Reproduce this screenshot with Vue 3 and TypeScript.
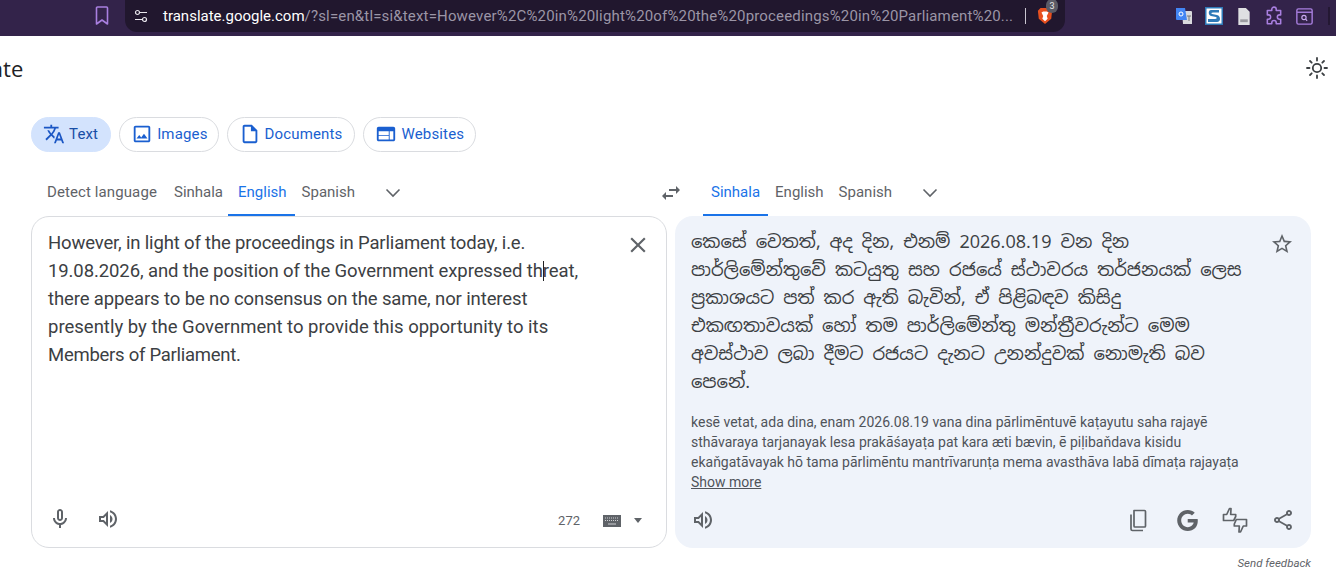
<script setup lang="ts">
const P = {
  mic: 'M12 14c1.66 0 3-1.34 3-3V5c0-1.66-1.34-3-3-3S9 3.34 9 5v6c0 1.66 1.34 3 3 3zm-1-9c0-.55.45-1 1-1s1 .45 1 1v6c0 .55-.45 1-1 1s-1-.45-1-1V5zm6 6c0 2.76-2.24 5-5 5s-5-2.24-5-5H5c0 3.53 2.61 6.43 6 6.92V21h2v-3.08c3.39-.49 6-3.39 6-6.92h-2z',
  vol: 'M3 9v6h4l5 5V4L7 9H3zm7-.17v6.34L7.83 13H5v-2h2.83L10 8.83zM16.5 12c0-1.77-1.02-3.29-2.5-4.03v8.05c1.48-.73 2.5-2.25 2.5-4.02zM14 3.23v2.06c2.89.86 5 3.54 5 6.71s-2.11 5.85-5 6.71v2.06c4.01-.91 7-4.49 7-8.77 0-4.28-2.99-7.86-7-8.77z',
  close: 'M19 6.41L17.59 5 12 10.59 6.41 5 5 6.41 10.59 12 5 17.59 6.41 19 12 13.41 17.59 19 19 17.59 13.41 12z',
  star: 'M22 9.24l-7.19-.62L12 2 9.19 8.63 2 9.24l5.46 4.73L5.82 21 12 17.27 18.18 21l-1.63-7.03L22 9.24zM12 15.4l-3.76 2.27 1-4.28-3.32-2.88 4.38-.38L12 6.1l1.71 4.04 4.38.38-3.32 2.88 1 4.28L12 15.4z',
  share: 'M18 16.08c-.76 0-1.44.3-1.96.77L8.91 12.7c.05-.23.09-.46.09-.7s-.04-.47-.09-.7l7.05-4.11c.54.5 1.25.81 2.04.81 1.66 0 3-1.34 3-3s-1.34-3-3-3-3 1.34-3 3c0 .24.04.47.09.7L8.04 9.81C7.5 9.31 6.79 9 6 9c-1.66 0-3 1.34-3 3s1.34 3 3 3c.79 0 1.5-.31 2.04-.81l7.12 4.16c-.05.21-.08.43-.08.65 0 1.61 1.31 2.92 2.92 2.92s2.92-1.31 2.92-2.92-1.31-2.92-2.92-2.92zM18 4c.55 0 1 .45 1 1s-.45 1-1 1-1-.45-1-1 .45-1 1-1zM6 13c-.55 0-1-.45-1-1s.45-1 1-1 1 .45 1 1-.45 1-1 1zm12 7.02c-.55 0-1-.45-1-1s.45-1 1-1 1 .45 1 1-.45 1-1 1z',
  g: 'M12.24 10.285V14.4h6.806c-.275 1.765-2.056 5.174-6.806 5.174-4.095 0-7.439-3.389-7.439-7.574s3.345-7.574 7.439-7.574c2.33 0 3.891.989 4.785 1.849l3.254-3.138C18.189 1.186 15.479 0 12.24 0c-6.635 0-12 5.365-12 12s5.365 12 12 12c6.926 0 11.52-4.869 11.52-11.726 0-.788-.085-1.39-.189-1.989H12.24z',
  translate: 'M12.87 15.07l-2.54-2.51.03-.03c1.74-1.94 2.98-4.17 3.71-6.53H17V4h-7V2H8v2H1v1.99h11.17C11.5 7.92 10.44 9.75 9 11.35 8.07 10.32 7.3 9.19 6.69 8h-2c.73 1.63 1.73 3.17 2.98 4.56l-5.09 5.02L4 19l5-5 3.11 3.11.76-2.04zM18.5 10h-2L12 22h2l1.12-3h4.75L21 22h2l-4.5-12zm-2.62 7l1.62-4.33L19.12 17h-3.24z',
  swap: 'M6.99 11L3 15l3.99 4v-3H14v-2H6.99v-3zM21 9l-3.99-4v3H10v2h7.01v3L21 9z',
  image: 'M19 5v14H5V5h14m0-2H5c-1.1 0-2 .9-2 2v14c0 1.1.9 2 2 2h14c1.1 0 2-.9 2-2V5c0-1.1-.9-2-2-2zm-4.86 8.86l-3 3.87L9 13.14 6 17h12l-3.86-5.14z',
  doc: 'M14 2H6c-1.1 0-2 .9-2 2v16c0 1.1.9 2 2 2h12c1.1 0 2-.9 2-2V8l-6-6zm4 18H6V4h7v5h5v11z',
  web: 'M20 4H4c-1.1 0-2 .9-2 2v12c0 1.1.9 2 2 2h16c1.1 0 2-.9 2-2V6c0-1.1-.9-2-2-2zM15 18H4v-4h11v4zm0-5H4V9h11v4zm5 5h-4V9h4v9z',
}
const sourceTabs = [
  { name: 'Detect language', active: false },
  { name: 'Sinhala', active: false },
  { name: 'English', active: true },
  { name: 'Spanish', active: false },
]
const targetTabs = [
  { name: 'Sinhala', active: true },
  { name: 'English', active: false },
  { name: 'Spanish', active: false },
]
const modes = [
  { name: 'Images', icon: P.image },
  { name: 'Documents', icon: P.doc },
  { name: 'Websites', icon: P.web },
]
</script>

<template>
  <div class="page">
    <header class="chrome">
      <svg class="bookmark" viewBox="0 0 14 20" width="14" height="20"><path d="M1.500 2a1 1 0 0 1 1-1h9a1 1 0 0 1 1 1v16L7 14l-5.500 4z" fill="none" stroke="#a97fe0" stroke-width="1.600" stroke-linejoin="round"/></svg>
      <div class="omnibox">
        <svg class="tune" viewBox="0 0 14 14" width="14" height="14"><g fill="none" stroke="#e8e6ec" stroke-width="1.200"><circle cx="3.500" cy="3.500" r="2"/><path d="M6 3.500h7M1 10.500h7"/><circle cx="10.500" cy="10.500" r="2"/></g></svg>
        <div class="url"><span class="host">translate.google.com</span>/?sl=en&amp;tl=si&amp;text=However%2C%20in%20light%20of%20the%20proceedings%20in%20Parliament%20...</div>
        <span class="divider"></span>
        <div class="brave">
          <svg viewBox="0 0 18 20" width="16" height="20"><path d="M4 1h10l3 3-1 9-7 6-7-6-1-9z" fill="#e8501f"/><path d="M5 6l2-1h4l2 1-2 4 1 3-3 3-3-3 1-3z" fill="#fff"/></svg>
          <span class="badge">3</span>
        </div>
      </div>
      <div class="extensions">
        <span class="ext"><svg viewBox="0 0 18 18" width="18" height="18"><path d="M7 4h9a1 1 0 0 1 1 1v12H8z" fill="#d9dadd"/><path d="M1 1h9l2 12H2a1 1 0 0 1-1-1z" fill="#4285f4"/><circle cx="6" cy="7" r="2" fill="none" stroke="#fff" stroke-width="1"/><path d="M12 9h4M14 9v5" stroke="#777" stroke-width="1"/></svg></span>
        <span class="ext"><svg viewBox="0 0 18 18" width="18" height="18"><rect width="18" height="18" fill="#2f7ab8"/><rect x="1.500" y="1.500" width="15" height="15" fill="#fff"/><path d="M14 3H6C3 3 3 8 6 9l5 1c1 .5 1 2-1 2H3v3h9c4 0 4-6 0-7L7 7c-1-.5-1-1.500 1-1.500h6z" fill="#2f7ab8"/></svg></span>
        <span class="ext"><svg viewBox="0 0 14 18" width="14" height="17"><path d="M1 0h8l4 4v14H1z" fill="#dfe0e2"/><rect x="3" y="12" width="8" height="3" fill="#9b9ba0"/></svg></span>
        <span class="ext"><svg viewBox="0 0 18 18" width="20" height="20"><path d="M7 3a2 2 0 0 1 4 0v1h4v4h-1a2 2 0 0 0 0 4h1v4h-4v-1a2 2 0 0 0-4 0v1H3v-4h1a2 2 0 0 0 0-4H3V4h4z" fill="none" stroke="#a97fe0" stroke-width="1.400" stroke-linejoin="round"/></svg></span>
        <span class="ext"><svg viewBox="0 0 16 16" width="17" height="17"><rect x=".8" y=".8" width="14.400" height="14.400" rx="1.500" fill="none" stroke="#a97fe0" stroke-width="1.300"/><path d="M1 4h14" stroke="#a97fe0" stroke-width="1.300"/><circle cx="7.500" cy="9" r="2" fill="none" stroke="#c9a8f0" stroke-width="1.100"/><path d="M9 10.500l1.500 1.500" stroke="#c9a8f0" stroke-width="1.100"/></svg></span>
        <span class="ext-end"></span>
      </div>
    </header>

    <div class="title-row">
      <span class="title">Translate</span>
      <svg class="sun" viewBox="0 0 24 24" width="24" height="24"><g fill="none" stroke="#3c4043" stroke-width="1.800" stroke-linecap="round"><circle cx="12" cy="12" r="4.200"/><path d="M12 2v2.500M12 19.500V22M2 12h2.500M19.500 12H22M5 5l1.700 1.700M17.300 17.300L19 19M5 19l1.700-1.700M17.300 6.700L19 5"/></g></svg>
    </div>

    <nav class="modes">
      <button class="mode mode-active">
        <svg viewBox="0 0 24 24" width="22" height="22"><path :d="P.translate" fill="#1a56c4"/></svg>
        Text
      </button>
      <button v-for="m in modes" :key="m.name" class="mode">
        <svg viewBox="0 0 24 24" width="22" height="22"><path :d="m.icon" fill="#1a5fd0"/></svg>
        {{ m.name }}
      </button>
    </nav>

    <div class="lang-row">
      <div class="lang-side source-side">
        <span v-for="t in sourceTabs" :key="t.name" class="lang" :class="{ active: t.active }">{{ t.name }}</span>
        <svg class="chev" viewBox="0 0 16 10" width="16" height="10"><path d="M1.500 1.500L8 8l6.500-6.500" fill="none" stroke="#5f6368" stroke-width="1.600"/></svg>
      </div>
      <svg class="swap" viewBox="0 0 24 24" width="24" height="24"><path :d="P.swap" fill="#5f6368"/></svg>
      <div class="lang-side target-side">
        <span v-for="t in targetTabs" :key="t.name" class="lang" :class="{ active: t.active }">{{ t.name }}</span>
        <svg class="chev" viewBox="0 0 16 10" width="16" height="10"><path d="M1.500 1.500L8 8l6.500-6.500" fill="none" stroke="#5f6368" stroke-width="1.600"/></svg>
      </div>
    </div>

    <main class="panels">
      <section class="panel source">
        <div class="panel-top">
          <p class="source-text">
            <span class="line l1">However, in light of the proceedings in Parliament today, i.e.</span>
            <span class="line l2">19.08.2026, and the position of the Government expressed th<span class="caret"></span>reat,</span>
            <span class="line l3">there appears to be no consensus on the same, nor interest</span>
            <span class="line l4">presently by the Government to provide this opportunity to its</span>
            <span class="line l5">Members of Parliament.</span>
          </p>
          <svg class="corner" viewBox="0 0 24 24" width="26" height="26"><path :d="P.close" fill="#5f6368"/></svg>
        </div>
        <div class="panel-foot">
          <div class="foot-group">
            <svg viewBox="0 0 24 24" width="24" height="24"><path :d="P.mic" fill="#5f6368"/></svg>
            <svg viewBox="0 0 24 24" width="24" height="24"><path :d="P.vol" fill="#5f6368"/></svg>
          </div>
          <div class="foot-right">
            <span class="count">272</span>
            <svg class="kbd" viewBox="0 0 18 12" width="18" height="12"><rect width="18" height="12" y="0" fill="#5f6368"/><path d="M2 3h14M2 5.500h14" stroke="#cfd0d3" stroke-width="1" stroke-dasharray="1 1"/><path d="M5 9h8" stroke="#cfd0d3" stroke-width="1"/></svg>
            <svg viewBox="0 0 8 5" width="8" height="5"><path d="M0 0h8L4 5z" fill="#5f6368"/></svg>
          </div>
        </div>
      </section>

      <section class="panel target">
        <div class="panel-top">
          <div class="target-body">
            <p class="target-text">කෙසේ වෙතත්, අද දින, එනම් 2026.08.19 වන දින<br>පාර්ලිමේන්තුවේ කටයුතු සහ රජයේ ස්ථාවරය තර්ජනයක් ලෙස<br>ප්‍රකාශයට පත් කර ඇති බැවින්, ඒ පිළිබඳව කිසිදු<br>එකඟතාවයක් හෝ තම පාර්ලිමේන්තු මන්ත්‍රීවරුන්ට මෙම<br>අවස්ථාව ලබා දීමට රජයට දැනට උනන්දුවක් නොමැති බව<br>පෙනේ.</p>
            <p class="translit">kesē vetat, ada dina, enam 2026.08.19 vana dina pārlimēntuvē kaṭayutu saha rajayē<br>sthāvaraya tarjanayak lesa prakāśayaṭa pat kara æti bævin, ē piḷibaňdava kisidu<br>ekaňgatāvayak hō tama pārlimēntu mantrīvarunṭa mema avasthāva labā dīmaṭa rajayaṭa</p>
            <a class="more">Show more</a>
          </div>
          <svg class="corner star" viewBox="0 0 24 24" width="24" height="24"><path :d="P.star" fill="#5f6368"/></svg>
        </div>
        <div class="panel-foot target-foot">
          <svg viewBox="0 0 24 24" width="24" height="24"><path :d="P.vol" fill="#5f6368"/></svg>
          <div class="foot-group">
            <svg viewBox="0 0 24 24" width="24" height="24"><g fill="none" stroke="#5f6368" stroke-width="1.700" stroke-linejoin="round"><path d="M7 2.500h10.500a1 1 0 0 1 1 1V18a1 1 0 0 1-1 1H8a1 1 0 0 1-1-1z"/><path d="M4 6.500V21a1.500 1.500 0 0 0 1.500 1.500H16"/></g></svg>
            <span class="g-slot"><svg viewBox="0 0 24 24" width="21" height="21"><path :d="P.g" fill="#5f6368"/></svg></span>
            <svg viewBox="0 0 26 26" width="26" height="26" class="fb"><g fill="none" stroke="#5f6368" stroke-width="1.700" stroke-linejoin="round"><path d="M1.500 13.500V7.500h3.200L7.500 1.500H9l-.3 6h5v2l-2 4z"/><path d="M24.500 12.500v6.500h-3.200L18.500 25H17l.3-6h-5v-2l2-4.500z"/></g></svg>
            <svg viewBox="0 0 24 24" width="24" height="24"><path :d="P.share" fill="#5f6368"/></svg>
          </div>
        </div>
      </section>
    </main>

    <div class="feedback">Send feedback</div>
  </div>
</template>

<style scoped>
.page {
  width: 1336px;
  height: 585px;
  overflow: hidden;
  background: #fff;
  font-family: Roboto, "Noto Sans", sans-serif;
  color: #3c4043;
}
.chrome {
  height: 36px;
  background: #33234a;
  display: flex;
  align-items: flex-start;
}
.bookmark { margin: 6px 0 0 95px; }
.omnibox {
  margin-left: 16px;
  width: 940px;
  height: 32px;
  background: #21172e;
  border-radius: 0 0 12px 12px;
  display: flex;
  align-items: center;
  box-sizing: border-box;
  padding-left: 9px;
}
.url {
  margin-left: 15px;
  font-size: 15px;
  color: #9b95a6;
  white-space: nowrap;
  width: 848px;
  letter-spacing: .16px;
}
.host { color: #fff; letter-spacing: 0; }
.divider { width: 1px; height: 16px; background: #c9c5d0; margin-left: 14px; }
.brave { position: relative; margin-left: 11px; height: 20px; }
.badge {
  position: absolute;
  left: 9px;
  top: -7px;
  width: 12px;
  height: 14px;
  border-radius: 6px;
  background: #5b5b66;
  color: #e8e8ea;
  font-size: 9px;
  line-height: 14px;
  text-align: center;
}
.extensions {
  display: flex;
  align-items: center;
  margin: 6px 0 0 104px;
  height: 20px;
}
.ext {
  width: 30px;
  height: 20px;
  display: flex;
  align-items: center;
  justify-content: center;
}
.ext-end { width: 2px; height: 18px; background: #241833; margin-left: 9px; }
.title-row {
  height: 66px;
  display: flex;
  align-items: center;
  justify-content: space-between;
  padding: 0 7px 2px 0;
  box-sizing: border-box;
}
.title {
  font-family: "Open Sans", sans-serif;
  font-size: 22px;
  color: #202124;
  margin-left: -72px;
  margin-top: -1px;
}
.modes {
  display: flex;
  gap: 8px;
  margin: 15px 0 0 31px;
}
.mode {
  height: 35px;
  border: 1px solid #dadce0;
  border-radius: 18px;
  background: #fff;
  color: #1a5fd0;
  font-family: Roboto, sans-serif;
  font-size: 15px;
  font-weight: 400;
  letter-spacing: .15px;
  padding: 0 10px 1px 11px;
  display: flex;
  align-items: center;
  gap: 4px;
}
.mode:nth-child(3) { padding-right: 12px; }
.mode:nth-child(4) { padding-right: 11px; }
.mode-active {
  background: #d3e3fd;
  border-color: #d3e3fd;
  color: #174ea6;
  padding-right: 12px;
}
.lang-row {
  display: flex;
  align-items: center;
  height: 47px;
  margin-top: 17px;
  padding-left: 31px;
}
.lang-side {
  display: flex;
  align-items: center;
  height: 47px;
}
.source-side { width: 628px; }
.target-side { margin-left: 20px; }
.lang {
  height: 47px;
  line-height: 47px;
  padding: 0 8px;
  font-size: 15px;
  color: #5f6368;
  box-sizing: border-box;
  white-space: nowrap;
}
.lang.active { color: #1a73e8; border-bottom: 2px solid #1a73e8; }
.source-side .lang:nth-child(1) { margin-left: 8px; padding-right: 9px; letter-spacing: .1px; }
.source-side .lang:nth-child(2) { padding-right: 5px; }
.source-side .lang:nth-child(3) { padding-left: 10px; }
.source-side .lang:nth-child(4) { padding-left: 7px; }
.target-side .lang:nth-child(2) { padding-left: 7px; }
.target-side .lang:nth-child(3) { padding-left: 7px; }
.chev { margin-left: 22px; }
.swap { flex: none; }
.panels {
  display: flex;
  gap: 8px;
  padding-left: 31px;
}
.panel {
  width: 636px;
  height: 332px;
  box-sizing: border-box;
  border-radius: 18px;
  display: flex;
  flex-direction: column;
  justify-content: space-between;
}
.source { border: 1px solid #dadce0; }
.target { background: #eff3fa; }
.panel-top { display: flex; justify-content: space-between; align-items: flex-start; }
.source-text {
  margin: 12px 0 0 16px;
  font-size: 18.500px;
  line-height: 28px;
  color: #3c4043;
  white-space: nowrap;
}
.line { display: block; }
.l1 { letter-spacing: -.16px; }
.l2 { letter-spacing: -.1px; }
.l3 { letter-spacing: -.12px; }
.l5 { letter-spacing: -.27px; }
.caret {
  display: inline-block;
  width: 1px;
  height: 20px;
  background: #202124;
  vertical-align: -4px;
  margin-right: -1px;
}
.corner { margin: 15px 15px 0 0; flex: none; }
.star { margin: 16px 17px 0 0; }
.target-body { padding: 12px 0 0 16px; }
.target-text {
  margin: 0;
  font-size: 18px;
  line-height: 28px;
  color: #3c4043;
  font-family: "Noto Sans Sinhala", "Noto Sans", sans-serif;
  white-space: nowrap;
}
.translit {
  margin: 16px 0 0;
  font-size: 14px;
  line-height: 20px;
  color: #50545a;
  white-space: nowrap;
}
.more {
  display: block;
  font-size: 14px;
  line-height: 20px;
  color: #50545a;
  text-decoration: underline;
}
.panel-foot {
  display: flex;
  align-items: center;
  justify-content: space-between;
  height: 24px;
  padding: 0 24px 16px 16px;
}
.target-foot { padding: 0 16px 16px 16px; }
.foot-group { display: flex; align-items: center; gap: 24px; }
.g-slot { width: 24px; height: 24px; display: flex; align-items: center; justify-content: center; }
.fb { margin: 0 -1px; }
.foot-right { display: flex; align-items: center; gap: 13px; font-size: 13px; color: #5f6368; padding-top: 3px; }
.count { margin-right: 10px; }
.feedback {
  width: 1311px;
  text-align: right;
  font-size: 11.500px;
  font-style: italic;
  color: #5f6368;
  margin-top: 8px;
}
</style>
